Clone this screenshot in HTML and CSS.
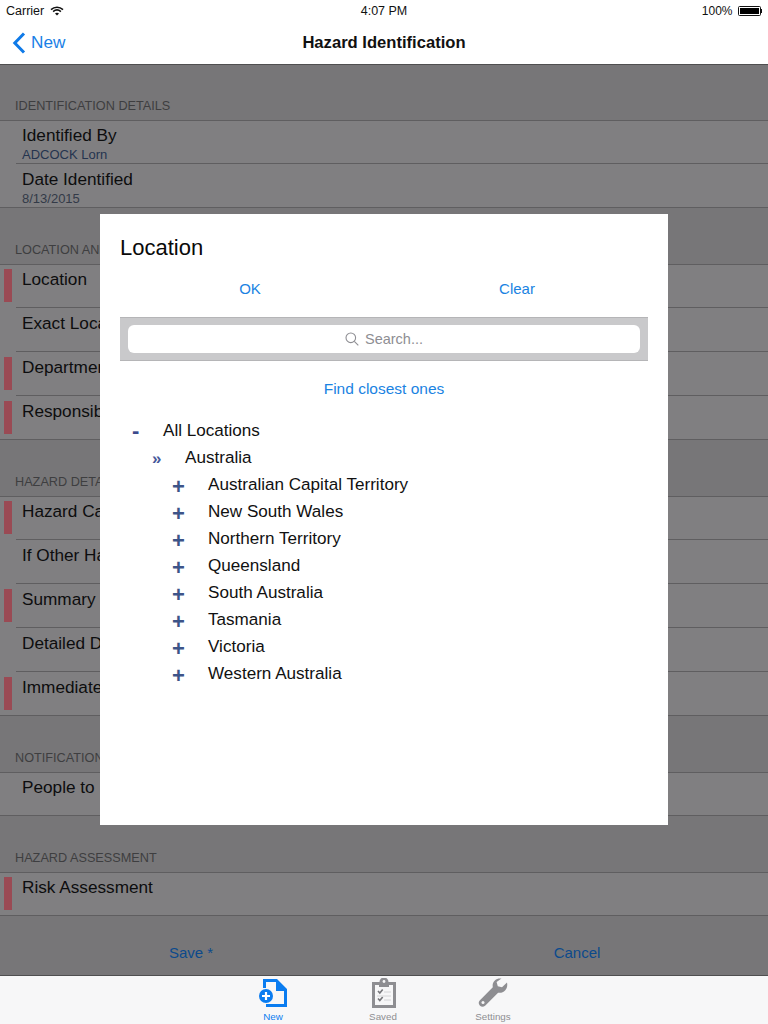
FILE: index.html
```html
<!DOCTYPE html>
<html lang="en">
<head>
<meta charset="utf-8">
<title>Hazard Identification</title>
<link rel="stylesheet" href="styles.css">
</head>
<body>
<div class="page">
  <header class="status">
    <div class="status-left">Carrier
      <svg class="wifi" viewBox="0 0 14 10" width="14" height="10"><path d="M1 3.600C4.400.5 9.600.5 13 3.600" class="wifi-arc"/><path d="M3.100 5.600c2.300-2 5.500-2 7.800 0" class="wifi-arc"/><path d="M7 9.600 5 7.400c1.200-.9 2.800-.9 4 0z" class="wifi-dot"/></svg>
    </div>
    <div class="status-time">4:07 PM</div>
    <div class="status-right">100%
      <span class="battery"><span class="battery-fill"></span></span><span class="battery-tip"></span>
    </div>
  </header>
  <nav class="nav">
    <div class="nav-back">
      <svg viewBox="0 0 14 22" width="14" height="22"><path d="M12 1.500 2.800 11l9.200 9.500" class="chevron"/></svg>
      <span>New</span>
    </div>
    <div class="nav-title">Hazard Identification</div>
  </nav>
  <main class="content">
    <section class="group group-first">
      <h2 class="group-title">IDENTIFICATION DETAILS</h2>
      <div class="rows">
        <div class="row"><div class="label">Identified By</div><div class="value">ADCOCK Lorn</div></div>
        <div class="row"><div class="label">Date Identified</div><div class="value value-date">8/13/2015</div></div>
      </div>
    </section>
    <section class="group">
      <h2 class="group-title">LOCATION AND DEPARTMENT</h2>
      <div class="rows">
        <div class="row required"><div class="label">Location</div></div>
        <div class="row row-tall"><div class="label">Exact Location</div></div>
        <div class="row row-tall required"><div class="label">Department</div></div>
        <div class="row required"><div class="label">Responsible</div></div>
      </div>
    </section>
    <section class="group">
      <h2 class="group-title">HAZARD DETAILS</h2>
      <div class="rows">
        <div class="row required"><div class="label">Hazard Category</div></div>
        <div class="row row-tall"><div class="label">If Other Hazard</div></div>
        <div class="row row-tall required"><div class="label">Summary</div></div>
        <div class="row row-tall"><div class="label">Detailed Description</div></div>
        <div class="row required"><div class="label">Immediate Action</div></div>
      </div>
    </section>
    <section class="group">
      <h2 class="group-title">NOTIFICATIONS</h2>
      <div class="rows">
        <div class="row row-short"><div class="label">People to Notify</div></div>
      </div>
    </section>
    <section class="group">
      <h2 class="group-title">HAZARD ASSESSMENT</h2>
      <div class="rows">
        <div class="row row-short required"><div class="label">Risk Assessment</div></div>
      </div>
    </section>
    <div class="actions">
      <span class="action">Save *</span>
      <span class="action">Cancel</span>
    </div>
  </main>
  <footer class="tabbar">
    <div class="tab tab-active">
      <svg viewBox="0 0 30 30" width="30" height="30"><path d="M5 1h14l10 10v18H8v-3h18V13h-8V4H8v6H5z" fill="#0a7cf0"/><circle cx="8" cy="18" r="7" fill="#0a7cf0"/><path d="M8 14v8M4 18h8" stroke="#fff" stroke-width="2.200"/></svg>
      <span>New</span>
    </div>
    <div class="tab">
      <svg viewBox="0 0 30 30" width="30" height="30"><path d="M4 4h7.500a4.500 4.500 0 0 1 9 0H28v26H4z" fill="#8e8e92"/><path d="M7 7h18v20H7z" fill="#f7f7f8"/><circle cx="16" cy="3.500" r="1.400" fill="#f7f7f8"/><path d="M11 5h10v4H11z" fill="#8e8e92"/><path d="M10 13l1.800 2 2.900-3.600M10 20.500l1.800 2 2.900-3.600" fill="none" stroke="#77777b" stroke-width="1.600"/><path d="M16 14h7M16 22h7M9 18h14" stroke="#d4d4d6"/></svg>
      <span>Saved</span>
    </div>
    <div class="tab">
      <svg viewBox="0 0 30 30" width="30" height="30"><path d="M29 4.500l-5 4.700-4.200-1-1.200-4.200L23.500.5C18.500-.3 13.700 3.200 14.800 9.300L1.700 22.400c-1.600 1.700-1 4 .3 5.300 1.400 1.400 3.500 1.500 5.100 0l13-13c6 1 10.300-4.300 8.900-10.200z" fill="#8e8e92"/><circle cx="5" cy="24.600" r="1.500" fill="#f7f7f8"/></svg>
      <span>Settings</span>
    </div>
  </footer>
  <div class="modal">
    <h1 class="modal-title">Location</h1>
    <div class="modal-actions">
      <span class="link">OK</span>
      <span class="link">Clear</span>
    </div>
    <div class="search">
      <div class="search-field">
        <svg viewBox="0 0 14 14" width="14" height="14"><circle cx="5.800" cy="5.800" r="4.800" class="search-icon"/><path d="M9.300 9.300l4 4" class="search-icon"/></svg>
        <span>Search...</span>
      </div>
    </div>
    <div class="closest"><span class="link link-wide">Find closest ones</span></div>
    <ul class="tree">
      <li class="node level-0"><span class="marker marker-minus">-</span><span>All Locations</span></li>
      <li class="node level-1"><span class="marker marker-arrows">»</span><span>Australia</span></li>
      <li class="node level-2"><span class="marker">+</span><span>Australian Capital Territory</span></li>
      <li class="node level-2"><span class="marker">+</span><span>New South Wales</span></li>
      <li class="node level-2"><span class="marker">+</span><span>Northern Territory</span></li>
      <li class="node level-2"><span class="marker">+</span><span>Queensland</span></li>
      <li class="node level-2"><span class="marker">+</span><span>South Australia</span></li>
      <li class="node level-2"><span class="marker">+</span><span>Tasmania</span></li>
      <li class="node level-2"><span class="marker">+</span><span>Victoria</span></li>
      <li class="node level-2"><span class="marker">+</span><span>Western Australia</span></li>
    </ul>
  </div>
</div>
</body>
</html>
```
FILE: styles.css
```css
* { box-sizing: border-box; }
html, body { margin: 0; padding: 0; }
body { font-family: "Liberation Sans", Arial, sans-serif; color: #000; background: #fff; }
.page { position: relative; width: 768px; height: 1024px; overflow: hidden; display: flex; flex-direction: column; }

.status { height: 20px; flex: none; display: grid; grid-template-columns: 1fr auto 1fr; align-items: center; padding: 2px 6px 0; font-size: 12.500px; background: #fff; color: #111; }
.status-left { display: flex; align-items: center; gap: 6px; }
.status-right { display: flex; align-items: center; justify-content: flex-end; font-size: 12px; }
.wifi-arc { fill: none; stroke: #111; stroke-width: 1.600; }
.wifi-dot { fill: #111; }
.battery { width: 23px; height: 10px; margin-left: 5px; border: 1px solid #111; padding: 1px; display: block; border-radius: 1.500px; }
.battery-fill { display: block; width: 100%; height: 100%; background: #000; }
.battery-tip { width: 1.500px; height: 4px; background: #111; }

.nav { height: 45px; flex: none; position: relative; display: flex; align-items: center; justify-content: center; background: #fff; border-bottom: 1px solid #4f4f50; }
.nav-back { position: absolute; left: 12px; top: 0; height: 44px; display: flex; align-items: center; gap: 5px; color: #1a7fe6; font-size: 17.200px; padding-top: 1px; }
.chevron { fill: none; stroke: #0f7ae8; stroke-width: 3; }
.nav-title { font-size: 16.600px; font-weight: 700; color: #111; padding-top: 1px; }

.content { flex: 1; min-height: 0; background: #777678; display: flex; flex-direction: column; }
.group-first { margin-top: -1px; }
.group-title { margin: 0; height: 56px; padding: 35px 0 0 15px; font-size: 12.700px; line-height: 15px; font-weight: 400; color: #3e3e40; }
.rows { border-top: 1px solid #5f5e60; border-bottom: 1px solid #5f5e60; background: #807f81; }
.row { position: relative; height: 43px; padding: 4px 0 0 22px; }
.row-tall { height: 44px; }
.row-short { height: 42px; }
.row + .row { padding-top: 5px; }
.row + .row::before { content: ""; position: absolute; left: 16px; right: 0; top: -1px; height: 1px; background: #5f5e60; }
.required::after { content: ""; position: absolute; left: 4px; top: 4px; width: 8px; height: 33px; background: #9a4a54; }
.row + .required::after { top: 5px; }
.label { font-size: 17.200px; line-height: 20px; color: #0d0d0e; }
.value { font-size: 13px; line-height: 15px; margin-top: 2px; color: #25344f; }
.value-date { color: #333a48; }

.actions { flex: 1; display: grid; grid-template-columns: 382px 382px; column-gap: 4px; align-items: center; justify-items: center; padding: 13px 0 0; }
.action { font-size: 15px; color: #0c4a8c; }

.tabbar { height: 49px; flex: none; border-top: 1px solid #4f4f50; background: #f7f7f8; display: flex; justify-content: center; gap: 80px; padding: 2px 2px 0 0; }
.tab { width: 30px; display: flex; flex-direction: column; align-items: center; font-size: 9.800px; color: #8e8e92; white-space: nowrap; line-height: 11px; }
.tab svg { flex: none; margin-bottom: 3px; }
.tab-active { color: #0a7cf0; }

.modal { position: absolute; left: 100px; top: 214px; width: 568px; height: 611px; background: #fff; padding: 0 20px; }
.modal-title { margin: 0; padding-top: 21px; font-size: 22px; line-height: 26px; font-weight: 400; color: #0a0a0a; }
.modal-actions { display: grid; grid-template-columns: 260px 274px; justify-items: center; margin-top: 15px; height: 24px; align-items: center; }
.link { font-size: 15px; color: #1a83e2; }
.link-wide { font-size: 15.500px; }
.search { margin-top: 17px; height: 44px; background: #c9c9cb; border-top: 1px solid #b5b5b7; border-bottom: 1px solid #b5b5b7; padding: 7px 8px 0; }
.search-field { height: 28px; background: #fff; border-radius: 6px; display: flex; align-items: center; justify-content: center; gap: 6px; font-size: 14.500px; color: #8e8e93; padding-bottom: 1px; }
.search-icon { fill: none; stroke: #8e8e93; stroke-width: 1.100; }
.closest { margin-top: 17px; height: 22px; text-align: center; line-height: 22px; }
.tree { list-style: none; margin: 17px 0 0; padding: 0; }
.node { display: flex; align-items: center; height: 27px; font-size: 17.100px; color: #111; }
.marker { flex: none; width: 30px; font-size: 22px; font-weight: 700; color: #3d5488; line-height: 27px; }
.level-0 { padding-left: 12px; }
.level-0 .marker { width: 31px; color: #3b4a8c; }
.level-1 { padding-left: 32px; }
.level-1 .marker { font-size: 17px; width: 33px; margin-top: 2px; color: #46589a; }
.level-2 { padding-left: 52px; }
.level-2 .marker { width: 36px; margin-top: 4px; }
```
